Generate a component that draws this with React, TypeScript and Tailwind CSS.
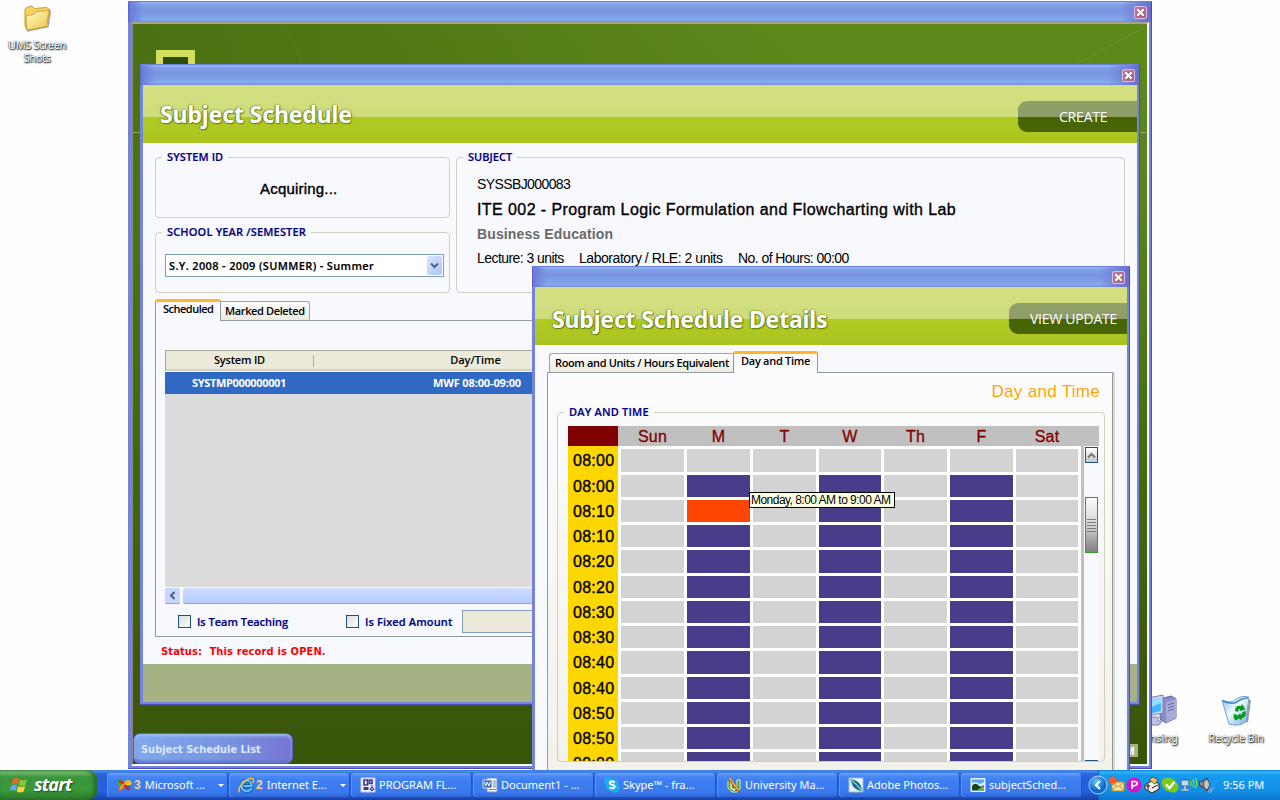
import React from "react";

const sans = "font-['Liberation_Sans',sans-serif]";
const ui = "font-['Open_Sans',sans-serif]";

function CloseButton() {
  return (
    <span className="flex h-[13px] w-[13px] items-center justify-center rounded-[2px] border border-[#d9bfe0] bg-gradient-to-br from-[#bf7f98] to-[#a65f86]">
      <svg width="9" height="9" viewBox="0 0 9 9" shapeRendering="crispEdges">
        <path d="M1 1h2v1h1v1h1V2h1V1h2v2H7v1H6v1h1v1h1v2H6V7H5V6H4v1H3v1H1V6h1V5h1V4H2V3H1z" fill="#fff" />
      </svg>
    </span>
  );
}

function Window({ place, children }: { place: string; children: React.ReactNode }) {
  return (
    <section className={`absolute flex flex-col ${place}`}>
      <div className="flex h-[21px] shrink-0 items-center justify-end border-x border-t border-l-[#5a62d0] border-r-[#4a4eae] border-t-[#6a80d8] bg-[linear-gradient(90deg,#6a78d8_0px,#6a78d800_14px),linear-gradient(270deg,#6a6cd0_0px,#6a6cd000_30px),linear-gradient(#93baf3_0px,#7f9fe6_3px,#7896df_8px,#7d9fe5_14px,#83aaec_18px,#7388de_20px)] pr-1 pt-px">
        <CloseButton />
      </div>
      <div className="flex min-h-0 flex-1 border-r border-b border-[#4d50b0] bg-[#7383de] pl-[3px] pr-[2px] pb-[2px]">
        <div className="flex min-w-0 flex-1 flex-col">{children}</div>
      </div>
    </section>
  );
}

function Header({ title, action, titleClass, actionClass }: { title: string; action: string; titleClass: string; actionClass: string }) {
  return (
    <header className="flex h-[58px] shrink-0 items-start justify-between bg-[linear-gradient(#d5df82_0px,#cfdc7b_32px,#b1ca22_32px,#abc420_58px)] pl-[17px]">
      <h1 className={`whitespace-nowrap font-['Noto_Sans',sans-serif] text-[23px] leading-[34px] font-bold text-white [text-shadow:0_0_2px_#5e7411,1px_1px_1px_#6d8514,-1px_0_1px_#8a9c3a] ${titleClass}`}>{title}</h1>
      <div className={`mt-4 h-[31px] rounded-l-[9px] bg-[linear-gradient(#90a268_0px,#8d9d67_16px,#476505_16px,#476505_31px)] ${ui} text-[14px] leading-[32px] text-white ${actionClass}`}>{action}</div>
    </header>
  );
}

function GroupBox({ label, box, labelClass, children }: { label: string; box: string; labelClass: string; children: React.ReactNode }) {
  return (
    <div className={`flex shrink-0 flex-col rounded-[4px] border border-[#d0d0bf] ${box}`}>
      <div className={`-mt-[9px] ml-[6px] w-fit whitespace-nowrap px-[5px] ${ui} text-[11px] leading-4 font-semibold text-[#00007f] [-webkit-text-stroke:0.2px_#00007f] ${labelClass}`}>{label}</div>
      {children}
    </div>
  );
}

function CheckBox() {
  return <span className="h-[13px] w-[13px] border border-[#1c5180] bg-gradient-to-br from-[#dcdcd7] to-white" />;
}

const week = [
  { name: "Sun", on: false },
  { name: "M", on: true },
  { name: "T", on: false },
  { name: "W", on: true },
  { name: "Th", on: false },
  { name: "F", on: true },
  { name: "Sat", on: false },
];
const times = ["08:00", "08:00", "08:10", "08:10", "08:20", "08:20", "08:30", "08:30", "08:40", "08:40", "08:50", "08:50", "09:00"];
const cols = "grid grid-cols-[63px_63px_63px_62px_63px_63px_62px] gap-x-[3px]";

function cellColor(row: number, col: number) {
  if (row === 2 && col === 1) return "bg-[#ff4500]";
  return row > 0 && week[col].on ? "bg-[#483d8b]" : "bg-[#d3d3d3]";
}

function TimeGrid() {
  return (
    <div className="ml-[10px] mt-[6px] flex h-[336px] w-[531px] flex-col overflow-hidden">
      <div className={`flex h-5 shrink-0 bg-[#c0c0c0] ${sans} text-[16px] leading-5 text-[#800000] [-webkit-text-stroke:0.3px_#800000]`}>
        <div className="w-[50px] bg-[#800000]" />
        <div className={`ml-[3px] ${cols} pt-px text-center tracking-[0.2px]`}>
          {week.map((d) => (
            <div key={d.name}>{d.name}</div>
          ))}
        </div>
      </div>
      <div className="flex min-h-0 flex-1">
        <div className="w-[513px] bg-white">
          <div className="flex h-[3px]">
            <div className="w-[50px] bg-[#ffd700]" />
          </div>
          {times.map((t, r) => (
            <div key={r} className={`flex ${r % 4 === 0 ? "h-[26px]" : "h-[25px]"}`}>
              <div className={`w-[50px] bg-[#ffd700] pl-[5px] ${sans} text-[16px] leading-6 tracking-[0.25px] text-black [-webkit-text-stroke:0.35px_black]`}>{t}</div>
              <div className={`ml-[3px] ${cols} pb-[3px]`}>
                {week.map((_, c) => (
                  <div key={c} className={cellColor(r, c)} />
                ))}
              </div>
            </div>
          ))}
        </div>
        <div className="w-[3px] bg-[#c0c0c0]" />
        <div className="ml-px flex w-[14px] flex-col bg-[#f8f8ff]">
          <div className="mt-px flex h-4 w-[13px] shrink-0 items-center justify-center border border-[#1c5180] bg-gradient-to-b from-white to-[#c9c9c9]">
            <svg width="9" height="7" viewBox="0 0 9 7"><path d="M1 5.500 4.500 2 8 5.500" fill="none" stroke="#777" strokeWidth="2" /></svg>
          </div>
          <div className="mt-[34px] flex h-14 w-[13px] shrink-0 flex-col items-center justify-center gap-[2px] border border-[#2f9e1c] bg-gradient-to-b from-[#fafafa] via-[#d5d5d5] to-[#808080]">
            {[0, 1, 2, 3, 4].map((i) => (
              <span key={i} className="h-px w-[9px] bg-[#7c7c7c]" />
            ))}
          </div>
          <div className="mt-[207px] h-4 w-[13px] shrink-0 border border-[#1c5180] bg-white" />
        </div>
      </div>
    </div>
  );
}

function FolderIcon() {
  return (
    <svg width="28" height="28" viewBox="0 0 28 28">
      <defs>
        <linearGradient id="fold" x1="0" y1="0" x2="1" y2="1"><stop offset="0" stopColor="#fffbc8" /><stop offset="1" stopColor="#efc545" /></linearGradient>
      </defs>
      <path d="M4 26 25 21.500 27.200 7 26 4" fill="none" stroke="#666" strokeWidth="1.600" opacity=".6" />
      <path d="M2 4 3.500 2.500 9 1l2.500 2.500L24 2.500 26.500 5 23.500 20.500 3.500 24.500 2 20z" fill="#f4d363" stroke="#c79c2c" />
      <path d="M3 11 11 9l2-2.500L26 5.500l-2.500 16L4 25z" fill="url(#fold)" stroke="#cf9f25" strokeWidth=".9" />
    </svg>
  );
}

function ComputerIcon() {
  return (
    <svg width="36" height="34" viewBox="0 0 36 34">
      <path d="M18 5 29 2l5 3v19l-10 5-6-4z" fill="#8b8bc8" stroke="#6262a2" />
      <path d="M24 8l10-3v19l-10 5z" fill="#a9a9d8" />
      <path d="M26 11l6-2M26 14l6-2M26 17l6-2" stroke="#6565a8" />
      <path d="M1 5 21 1v18L1 23z" fill="#d0d4ee" stroke="#7c81b4" />
      <path d="M3 7l16-3.500V17L3 21z" fill="#45b4fa" />
      <path d="M3 7l16-3.500V9L3 16z" fill="#97dbff" />
      <path d="M9 23h7v4h4l-3 4H6l-3-3 6-1z" fill="#c2c2e2" stroke="#8484b4" />
    </svg>
  );
}

function BinIcon() {
  return (
    <svg width="32" height="33" viewBox="0 0 32 33">
      <defs>
        <linearGradient id="bin" x1="0" y1="0" x2="1" y2="1"><stop offset="0" stopColor="#7cbaf0" /><stop offset=".45" stopColor="#eff9ff" /><stop offset="1" stopColor="#6dabe0" /></linearGradient>
      </defs>
      <path d="M27 28 30 6" stroke="#555" strokeWidth="2" opacity=".6" />
      <path d="M2 6q9 4 13 0 6-5 14-3l-3 25q-7 5-17 2Z" fill="url(#bin)" stroke="#70a0cc" />
      <path d="M3 7q9 4 14 1 5-4 11-4" fill="none" stroke="#3b8ad2" strokeWidth="1.500" />
      <path d="M15 17q0-6 6-5l1-2 3.500 5.500-6 1.500 .500-2q-2 0-2 3zM25.500 17q1.500 6-4 7.500l0 2-5-3.500 4-4 0 2q2-1 2-3zM14 20l3.500 1q-1 2.500 1 4l-3 1.500q-3-3-1.500-6.500z" fill="#0c9a1c" />
    </svg>
  );
}

const deskText = "text-center font-['Noto_Sans',sans-serif] text-[11px] leading-[13px] text-white [text-shadow:0_0_1px_#222,1px_1px_1px_#444,0_1px_2px_#555]";

const icons: Record<string, React.ReactNode> = {
  office: <><path d="M1 6q0-3 3-3.500Q6.500 3 8 5.500L6.500 9 4 9.500Q1 9 1 6z" fill="#43a640" /><path d="M8 5.500Q9.500 2.500 12.500 3q3 .5 3 3.500-1 2.500-3.500 2.500L9 8z" fill="#f7c42e" /><path d="M2 12q1-3 5-5l2 1.500Q7.500 13 5 13.500 2.500 14 2 12z" fill="#ee6420" /><path d="M8.500 8.500l4-.5q3 1.500 2 4-2 2-4 1-2-1.500-2-4.500z" fill="#3465cf" /><path d="M3 4q4 1 6 4.500t5 4" fill="none" stroke="#c9281a" strokeWidth="2.200" /><path d="M13 4Q8 6 4 12" fill="none" stroke="#f89c28" strokeWidth="1.800" /></>,
  ie: <><path d="M13.500 11q-2 3.500-6 3-4-1-4-5.500Q4 3.500 8.500 3.500q5 0 5 5.500H6" fill="none" stroke="#0d5aa8" strokeWidth="3.600" /><path d="M13.500 11q-2 3.500-6 3-4-1-4-5.500Q4 3.500 8.500 3.500q5 0 5 5.500H6" fill="none" stroke="#62c3f8" strokeWidth="2.200" /><path d="M1.500 15Q-.5 12 5 6t10-4q1.500 1-.5 4" fill="none" stroke="#f7c13d" strokeWidth="1.500" /></>,
  visio: <><path d="M1 1h14v14H1z" fill="#f4f4fb" stroke="#c8c8ea" /><path d="M4 3h3.500v5H4zM9.500 3H12v3.500H9.500z" fill="none" stroke="#3a3a96" strokeWidth="1.700" /><path d="M3.500 10h5v3h-5z" fill="#3a3a96" /><path d="M12 8v2l-2.200 2L12 14l2.200-2L12 10" fill="#8d8dd0" stroke="#3a3a96" /></>,
  word: <><path d="M5 1h10v14H5z" fill="#fff" stroke="#7f91b8" /><path d="M11 4h3M11 6h3M11 8h3M11 10h3M7 12.500h7" stroke="#6d87bd" /><path d="M1 3h9v8H1z" fill="#3f67b1" stroke="#dbe4f7" /><path d="M2.500 5l1.200 4 1.600-4 1.600 4L8.300 5" fill="none" stroke="#fff" /></>,
  skype: <><circle cx="5" cy="5" r="4.500" fill="#18afee" /><circle cx="11" cy="11" r="4.500" fill="#18afee" /><circle cx="8" cy="8" r="6.500" fill="#18afee" /><path d="M10.800 5.600Q8 3.500 6 5q-1 2 2 2.800 3.500.700 2.500 2.700-2 1.800-5-.3" fill="none" stroke="#fff" strokeWidth="2" /></>,
  ums: <><path d="M2 3h4l5 7V3h3v9l-3 3H6l-4-4z" fill="#379f35" /><path d="M2 4v7l4 4h5l3-3V3h-3v7" fill="none" stroke="#e9f0b2" /><path d="M5 5v6l3 2 3-3" fill="none" stroke="#f4f7c9" strokeWidth="1.500" /><path d="M3.500 1.500 12.500 14" stroke="#c74b18" strokeWidth="2.800" /><path d="M3.500 1 12.500 13.500" stroke="#ffd650" strokeWidth="1.200" /></>,
  photoshop: <><path d="M1 1h14v14H1z" fill="#eef5fb" stroke="#9db9d0" /><path d="M2 2q8 1 10.500 6l2 6.500q-6-1-9.500-5Z" fill="#176c9f" /><path d="M3 3q6 4 11 11" stroke="#83e0a0" fill="none" strokeWidth="1.300" /></>,
  image: <><path d="M1 1.500h14v13H1z" fill="#dbeeff" stroke="#e9edf2" /><path d="M2 2.500h12v6H2z" fill="#58a8ee" /><path d="M2 6q4-2 6 0t6-1v4H2z" fill="#cfe8fb" /><path d="M2 9q3-4 6-1t6 0v5.500H2z" fill="#13441d" /><path d="M7 13l7-4v4.500H7z" fill="#70b744" /></>,
};

function TaskIcon({ name }: { name: string }) {
  return <svg className="shrink-0" width="16" height="16" viewBox="0 0 16 16">{icons[name]}</svg>;
}

const tasks = [
  { icon: "office", count: "3", text: "Microsoft ..." },
  { icon: "ie", count: "2", text: "Internet E..." },
  { icon: "visio", text: "PROGRAM FL..." },
  { icon: "word", text: "Document1 - ..." },
  { icon: "skype", text: "Skype™ - fra..." },
  { icon: "ums", text: "University Ma..." },
  { icon: "photoshop", text: "Adobe Photos..." },
  { icon: "image", text: "subjectSched..." },
];

function Taskbar() {
  return (
    <footer className="absolute bottom-0 left-0 flex h-[30px] w-full bg-[linear-gradient(#3168d5_0px,#4993e6_1px,#2b63dd_4px,#245edb_10px,#2560dd_22px,#1941a5_30px)] font-['Noto_Sans',sans-serif] text-[11px] text-white">
      <div className="flex w-[97px] items-center rounded-r-[9px] bg-[linear-gradient(#5faa5c_0px,#79bf73_2px,#3c953c_7px,#3a993a_20px,#2c7a2c_30px)] pl-[10px] shadow-[inset_-3px_0_4px_#25652a]">
        <svg width="19" height="18" viewBox="0 0 19 18">
          <path d="M3 3q3-2 6 0L7.500 8.500q-3-2-6 0z" fill="#f2662e" />
          <path d="M10 3.500q3 2 7 0L15.500 9q-3 2-7 0z" fill="#89c63e" />
          <path d="M1.200 9.500q3-2 6 0L5.700 15q-3-2-6 0z" fill="#6ba2f5" />
          <path d="M8.200 10q3 2 7 0l-1.500 5.500q-4 2-7 0z" fill="#f9d43a" />
        </svg>
        <span className="ml-[5px] -mt-[2px] text-[18px] leading-[28px] font-bold italic tracking-[-0.8px] [text-shadow:1px_1px_2px_#1d4a1d]">start</span>
      </div>
      <div className="flex gap-px pl-[10px] pt-[3px]">
        {tasks.map((t) => (
          <div key={t.icon} className="flex h-6 w-[121px] items-center rounded-[3px] bg-[linear-gradient(#6ea4f8_0px,#4a88f3_3px,#3c7ef2_8px,#3a79ee_19px,#2f67d8_24px)] pl-[9px] shadow-[inset_1px_0_0_#5a96f5,inset_-1px_0_0_#2355bd]">
            <TaskIcon name={t.icon} />
            {t.count && <b className="ml-[2px] font-['Liberation_Sans'] text-[12px] text-[#ffd08a]">{t.count}</b>}
            <span className={`whitespace-nowrap ${t.count ? "ml-1" : "ml-[3px]"}`}>{t.text}</span>
            {t.count && <span className="mr-[4px] ml-auto h-0 w-0 border-x-[3px] border-t-[3px] border-x-transparent border-t-white" />}
          </div>
        ))}
      </div>
      <div className="ml-auto flex w-[182px] items-center border-l border-[#0e62b4] bg-[linear-gradient(#0c7ad8_0px,#35b5f4_2px,#159bee_5px,#1290e9_20px,#0f76cf_30px)]">
        <svg className="-ml-[11px]" width="20" height="20" viewBox="0 0 20 20">
          <defs><radialGradient id="chev" cx=".4" cy=".3"><stop offset="0" stopColor="#68c6fb" /><stop offset="1" stopColor="#1269cc" /></radialGradient></defs>
          <circle cx="10" cy="10" r="9" fill="url(#chev)" stroke="#a4d7f9" />
          <path d="M12 6 8 10l4 4" fill="none" stroke="#fff" strokeWidth="2.200" />
        </svg>
        <svg width="110" height="18" viewBox="0 0 110 18">
          <path d="M4 6h12v9H4z" fill="#fbe6a0" stroke="#b98c2b" /><path d="M4 6l6 5 6-5M4 15l4-5M16 15l-4-5" fill="none" stroke="#b98c2b" />
          <path d="M5 0v9M.500 4.500h9M2 1.500l6 6M8 1.500l-6 6" stroke="#ff5b22" strokeWidth="1.400" />
          <circle cx="26" cy="9" r="7.500" fill="#d713c9" /><path d="M24 13V5.500h3q2.500.500 2 2.500-.5 2-5 1.800" fill="none" stroke="#fff" strokeWidth="1.700" />
          <path d="M37 9l8-5 6 4v5l-7 4-7-4z" fill="#f2efe4" stroke="#222" /><path d="M41 4l4-3 5 3-3 4z" fill="#f3bf53" stroke="#333" strokeWidth=".7" /><path d="M40 8v6M38 10h4M44 12l6-3" stroke="#111" />
          <circle cx="59" cy="7" r="5.500" fill="#7ec81c" /><circle cx="65" cy="11" r="5.500" fill="#7ec81c" /><circle cx="62" cy="9" r="6.800" fill="#7ec81c" /><path d="M58 8.500l3.500 3.500 5-6" fill="none" stroke="#fff" strokeWidth="2.200" />
          <path d="M73 4h8v6h-8z" fill="#b8def5" stroke="#3b5c91" /><path d="M76 10v3h-3v2h8v-2h-3v-3" fill="#cddae8" stroke="#516f9d" strokeWidth=".7" /><path d="M82 5q2 2 0 5M84.500 3.500q3 4 0 7.500M87 2q4 5 0 10" fill="none" stroke="#6ee33d" strokeWidth="1.300" />
          <path d="M91 6l4-1 4-3q4 7 0 13l-4-4-3-1z" fill="#8b8b93" stroke="#3c3c46" /><ellipse cx="98.500" cy="8.500" rx="3" ry="5" fill="#c4c4cb" stroke="#444" /><path d="M100 16l3-4M102 17l4-6" stroke="#a8b8f0" />
        </svg>
        <span className="ml-[5px]">9:56 PM</span>
      </div>
    </footer>
  );
}

export default function App() {
  return (
    <div className="relative h-[800px] w-[1280px] overflow-hidden bg-[#fefefe]">
      <div className="absolute left-[2px] top-[5px] flex w-[70px] flex-col items-center">
        <FolderIcon />
        <div className={`mt-[5px] tracking-[-0.4px] ${deskText}`}>UMS Screen<br />Shots</div>
      </div>
      <div className="absolute left-[1142px] top-[694px] flex w-[40px] flex-col">
        <ComputerIcon />
        <div className={`mt-[3px] -ml-[22px] w-[58px] text-right ${deskText}`}>Licensing</div>
      </div>
      <div className="absolute left-[1201px] top-[694px] flex w-[70px] flex-col items-center">
        <BinIcon />
        <div className={`mt-[4px] whitespace-nowrap tracking-[-0.25px] ${deskText}`}>Recycle Bin</div>
      </div>

      <Window place="left-[128px] top-px h-[768px] w-[1024px]">
        <div className="relative flex flex-1 flex-col border-2 border-l-[#8b8779] border-t-[#a9a48d] border-r-white border-b-white bg-[radial-gradient(ellipse_700px_600px_at_0_0,#1f3d0055,#1f3d0000),linear-gradient(#5e8a1b,#57831a_25%,#426c0d_60%,#3c590b_88%,#39550a)]">
          <svg className="absolute left-0 top-0" width="1014" height="42" viewBox="0 0 1014 42">
            <path d="M148 0q18 20 22 42" fill="none" stroke="#6b9a2c" strokeWidth="1.500" opacity=".15" />
            <path d="M940 42 1014 2" fill="none" stroke="#86aa48" opacity=".3" />
            <path d="M125 40.500h7M143 40.500h5M233 40.500h5M268 40.500h14M330 40.500h8" stroke="#6f7a14" opacity=".7" />
          </svg>
          <div className="ml-[23px] mt-[26px] h-[40px] w-[39px] border-[7px] border-[#d2de5c] bg-[#2c4f09]" />
          <div className="mt-[42px] h-px bg-[#8eaa62]" />
          <div className="mt-auto flex items-end justify-between pr-[9px]">
            <div className="h-[31px] w-40 rounded-[7px] border border-[#5661c8] bg-[linear-gradient(90deg,#80a9ee,#7895e0_55%,#7676d4)] pl-[7px] font-['DejaVu_Sans_Condensed','DejaVu_Sans',sans-serif] text-[11px] leading-[32px] font-bold tracking-[-0.02px] whitespace-nowrap text-[#dce8ff] shadow-[inset_0_2px_3px_#9fc0f6,inset_0_-2px_3px_#5d71cb]">Subject Schedule List</div>
            <div className={`mb-[7px] bg-[#a5b283] px-[3px] ${ui} text-[11px] leading-[13px] font-bold text-white`}>9:56 PM</div>
          </div>
        </div>
      </Window>

      <Window place="left-[140px] top-[64px] h-[641px] w-[1000px]">
        <Header title="Subject Schedule" action="CREATE" titleClass="mt-3 tracking-[-0.12px]" actionClass="w-[119px] pl-[41px] tracking-[-0.2px]" />
        <div className="flex flex-1 flex-col bg-[#f8f8ff]">
          <div className="flex gap-[6px] pl-3 pt-[14px]">
            <div className="flex flex-col gap-[14px]">
              <GroupBox label="SYSTEM ID" box="h-[61px] w-[295px]" labelClass="bg-[#f8f8ff] tracking-[0.1px]">
                <div className={`mt-4 pl-[104px] ${sans} text-[15px] leading-[16px] tracking-[0.2px] text-black [-webkit-text-stroke:0.4px_black]`}>Acquiring...</div>
              </GroupBox>
              <GroupBox label="SCHOOL YEAR /SEMESTER" box="h-[61px] w-[295px]" labelClass="bg-[#f8f8ff] tracking-[0.17px]">
                <div className="mt-[14px] ml-[9px] flex h-[23px] w-[279px] items-center justify-between border border-[#7f9db9] bg-white pl-[3px] pr-px">
                  <span className={`${ui} pt-px text-[11px] font-semibold tracking-[0.36px] whitespace-pre text-black [-webkit-text-stroke:0.2px_black]`}>S.Y. 2008 - 2009 (SUMMER) - Summer</span>
                  <span className="flex h-[19px] w-[15px] items-center justify-center rounded-[2px] bg-gradient-to-br from-[#dbe6fe] to-[#adc4f6]">
                    <svg width="9" height="7" viewBox="0 0 9 7"><path d="M1 1.500 4.500 5 8 1.500" fill="none" stroke="#4d6185" strokeWidth="2" /></svg>
                  </span>
                </div>
              </GroupBox>
            </div>
            <GroupBox label="SUBJECT" box="h-[136px] w-[669px]" labelClass="bg-[#f8f8ff]">
              <div className={`flex flex-col whitespace-nowrap pl-5 text-black ${sans}`}>
                <div className="mt-[9px] text-[14px] leading-5 tracking-[-0.6px]">SYSSBJ000083</div>
                <div className="mt-[5px] text-[16px] leading-[22px] tracking-[0.42px] [-webkit-text-stroke:0.35px_black]">ITE 002 - Program Logic Formulation and Flowcharting with Lab</div>
                <div className="mt-[3px] text-[14px] leading-5 font-bold tracking-[0.13px] text-[#696969]">Business Education</div>
                <div className="mt-1 flex text-[14px] leading-5 tracking-[-0.56px]">
                  <span className="w-[102px]">Lecture: 3 units</span>
                  <span className="w-[159px] tracking-[-0.45px]">Laboratory / RLE: 2 units</span>
                  <span>No. of Hours: 00:00</span>
                </div>
              </div>
            </GroupBox>
          </div>

          <div className={`mt-[6px] ml-3 flex h-[21px] items-end ${ui} text-[11px] font-semibold text-black`}>
            <div className="relative -mb-px h-[22px] w-[66px] rounded-t-[3px] border border-b-0 border-t-[3px] border-[#919b9c] border-t-[#ffb52c] bg-[#f8f8ff] pl-[7px] leading-[14px] tracking-[-0.5px]">Scheduled</div>
            <div className="h-[19px] w-[89px] rounded-tr-[3px] border border-b-0 border-l-0 border-[#91a7b4] bg-gradient-to-b from-[#fdfdfe] to-[#eeece0] pl-1 leading-[17px] tracking-[-0.37px] whitespace-nowrap">Marked Deleted</div>
          </div>
          <div className="ml-3 flex h-[317px] w-[970px] flex-col border border-[#919b9c] pl-[9px] pt-[29px]">
            <div className={`flex h-[21px] w-full shrink-0 items-center border-t border-l border-[#aca899] bg-[linear-gradient(#ebeadb_0px,#ebeadb_17px,#cbc7b8_20px)] ${ui} text-[11px] font-semibold text-black`}>
              <div className="h-3 w-[148px] border-r border-[#aca899] text-center leading-[10px] tracking-[-0.2px]">System ID</div>
              <div className="w-[323px] pb-[2px] text-center leading-4">Day/Time</div>
            </div>
            <div className={`mt-px flex h-[22px] shrink-0 items-center bg-[#316ac5] ${ui} text-[11px] font-bold text-white`}>
              <div className="w-[148px] text-center tracking-[-0.35px]">SYSTMP000000001</div>
              <div className="w-[328px] text-center tracking-[-0.13px]">MWF 08:00-09:00</div>
            </div>
            <div className="h-[193px] shrink-0 bg-[#dcdcdc]" />
            <div className="mt-px flex h-4 shrink-0 gap-[3px]">
              <div className="flex w-[15px] items-center justify-center rounded-[2px] border-b border-[#8fa8d0] bg-[#c6d6fc]">
                <svg width="7" height="9" viewBox="0 0 7 9"><path d="M5.500 1 2 4.500 5.500 8" fill="none" stroke="#4d6185" strokeWidth="2" /></svg>
              </div>
              <div className="flex-1 rounded-l-[2px] border-b border-[#8fa8d0] bg-gradient-to-b from-[#cddcff] to-[#b6cbfb]" />
            </div>
            <div className={`mt-[6px] flex items-center pl-[13px] ${ui} text-[11px] font-semibold text-[#00007f] [-webkit-text-stroke:0.2px_#00007f]`}>
              <CheckBox />
              <span className="ml-[6px] w-[149px] pt-px tracking-[-0.02px]">Is Team Teaching</span>
              <CheckBox />
              <span className="ml-[6px] w-[97px] pt-px tracking-[0.13px]">Is Fixed Amount</span>
              <span className="h-[23px] w-[200px] border border-[#7f9db9] bg-[#ece9d8]" />
            </div>
          </div>
          <div className="mt-[6px] whitespace-pre pl-[18px] font-['DejaVu_Sans_Condensed','DejaVu_Sans',sans-serif] text-[11px] leading-[18px] font-bold tracking-[0.15px] text-[#ff0000]">Status:  This record is OPEN.</div>
          <div className="mt-auto h-[38px] bg-[#a5b283]" />
        </div>
      </Window>

      <Window place="left-[532px] top-[266px] h-[520px] w-[598px]">
        <Header title="Subject Schedule Details" action="VIEW UPDATE" titleClass="mt-[15px] tracking-[-0.17px]" actionClass="w-[118px] pl-[21px] tracking-[-0.25px] whitespace-nowrap" />
        <div className="flex flex-1 flex-col bg-[#f8f8ff] pl-3">
          <div className={`mt-[6px] flex h-[21px] items-end pl-[2px] ${ui} text-[11px] font-semibold text-black`}>
            <div className="h-[19px] w-[184px] whitespace-nowrap rounded-tl-[3px] border border-b-0 border-r-0 border-[#91a7b4] bg-gradient-to-b from-[#fdfdfe] to-[#eeece0] pl-[5px] leading-[17px] tracking-[-0.36px]">Room and Units / Hours Equivalent</div>
            <div className="relative -mb-px h-[22px] w-[85px] rounded-t-[3px] border border-b-0 border-t-[3px] border-[#919b9c] border-t-[#ffb52c] bg-[#fcfcfe] pl-[7px] leading-[14px] tracking-[-0.27px]">Day and Time</div>
          </div>
          <div className="flex w-[566px] flex-1 flex-col border border-[#919b9c] bg-gradient-to-b from-[#fcfcfe] to-[#f3f1ea] pl-[9px] shadow-[2px_0_0_#dedace]">
            <div className={`mt-[8px] pr-3 text-right ${sans} text-[17px] leading-[22px] tracking-[0.3px] text-[#ffa500]`}>Day and Time</div>
            <GroupBox label="DAY AND TIME" box="mt-[9px] h-[350px] w-[548px]" labelClass="bg-[#fafafb] tracking-[0.2px]">
              <TimeGrid />
            </GroupBox>
          </div>
        </div>
      </Window>

      <div className={`absolute left-[749px] top-[492px] h-4 w-[146px] border border-black bg-[#ffffe1] pl-px ${sans} text-[12px] leading-[14px] tracking-[-0.53px] whitespace-nowrap text-black`}>Monday, 8:00 AM to 9:00 AM</div>

      <Taskbar />
    </div>
  );
}
